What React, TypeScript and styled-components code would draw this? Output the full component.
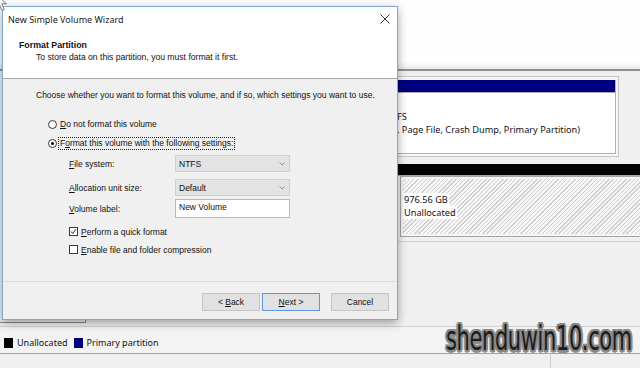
import React from "react";
import styled, { createGlobalStyle } from "styled-components";

const GlobalStyle = createGlobalStyle`
  html, body { margin: 0; padding: 0; background: #f0f0f0; }
  body { font-family: "Liberation Sans", Arial, sans-serif; color: #111; }
  #root { width: 640px; height: 368px; }
`;

const Screen = styled.div`
  position: relative;
  width: 640px;
  height: 368px;
  overflow: hidden;
  display: flex;
  flex-direction: column;
  background: #f0f0f0;
`;

/* ---------- background: disk management ---------- */
const TopPane = styled.div`
  flex: none;
  height: 69px;
  background: linear-gradient(#fefefe 0, #fefefe 62px, #e9e9e9 69px);
  border-bottom: 2px solid #8e8e8e;
`;

const DiskPane = styled.div`
  flex: none;
  height: 255px;
  display: grid;
  grid-template-columns: 86px 311px 1fr;
`;

const LabelColumn = styled.div`
  border-right: 1px solid #8a8a8a;
  border-bottom: 1px solid #8a8a8a;
  margin-bottom: 3px;
`;

const Hidden = styled.div``;

const DiskColumn = styled.div`
  display: flex;
  flex-direction: column;
  padding-top: 5px;
  border-bottom: 1px solid #cfcfcf;
  margin-bottom: 84px;
`;

const PartitionOuter = styled.div`
  width: 222px;
  height: 81px;
  box-sizing: border-box;
  border: 1px solid #c6c6c6;
  border-left: none;
  background: #f6f6f6;
  padding: 3px 2px 2px 0;
`;

const PartitionInner = styled.div`
  height: 100%;
  box-sizing: border-box;
  background: #fff;
  border: 1px solid #b0b0b0;
  border-left: none;
  border-top: none;
`;

const DiskBar = styled.div<{ $color: string; $height: number }>`
  height: ${(p) => p.$height}px;
  background: ${(p) => p.$color};
  border-bottom: 1px solid #a8a8a8;
`;

const VolumeText = styled.div`
  padding-top: 17px;
  font-family: "Noto Sans", "Open Sans", sans-serif;
  font-size: 9.2px;
  line-height: 13px;
  color: #111;
  white-space: nowrap;
`;

const UnallocRow = styled.div`
  margin-top: 7px;
  display: flex;
  flex-direction: column;
`;

const UnallocBox = styled.div`
  margin-left: 3px;
  height: 61px;
  box-sizing: border-box;
  border: 1px solid #a6a6a6;
  border-right: none;
  padding: 2px 0 2px 2px;
  background: #f4f4f4;
`;

const Hatch = styled.div`
  height: 100%;
  background: repeating-linear-gradient(-45deg, #cfcfcf 0 1px, #f7f7f7 1px 3px);
  padding: 14px 0 0 0;
  box-sizing: border-box;
  display: flex;
  flex-direction: column;
  align-items: flex-start;
  font-family: "Noto Sans", "Open Sans", sans-serif;
  font-size: 9.2px;
  line-height: 13px;
`;

const HatchLabel = styled.span`
  background: #fff;
  padding: 0 1px;
`;

const Legend = styled.div`
  flex: none;
  height: 21px;
  box-sizing: content-box;
  border-top: 1px solid #d2d2d2;
  border-bottom: 1px solid #a2a2a2;
  background: #f3f3f3;
  display: flex;
  align-items: center;
  padding: 5px 0 0 4px;
  margin-bottom: -5px;
  gap: 4px;
  font-family: "Noto Sans", "Open Sans", sans-serif;
  font-size: 9px;
`;

const Swatch = styled.span<{ $color: string }>`
  width: 9px;
  height: 10px;
  background: ${(p) => p.$color};
  display: inline-block;
`;

const LegendText = styled.span`
  margin-right: 2px;
`;

const StatusBar = styled.div`
  flex: 1;
  display: grid;
  grid-template-columns: 550px 1fr;
`;

const StatusCell = styled.div`
  & + & {
    border-left: 1px solid #d0d0d0;
  }
`;

/* ---------- dialog ---------- */
const Dialog = styled.div`
  position: absolute;
  left: 2px;
  top: 6px;
  width: 396px;
  height: 314px;
  box-sizing: border-box;
  border: 1px solid #7ea9d4;
  background: #fff;
  box-shadow: 0 3px 9px rgba(0, 0, 0, 0.35);
  display: flex;
  flex-direction: column;
`;

const TitleBar = styled.div`
  flex: none;
  height: 24px;
  display: flex;
  align-items: center;
  justify-content: space-between;
  padding: 0 7px 0 5px;
  font-family: "Noto Sans", "Open Sans", sans-serif;
  font-size: 9px;
  color: #1a1a1a;
`;

const Header = styled.div`
  flex: none;
  height: 48px;
  border-bottom: 1px solid #a9a9a9;
  padding: 8px 0 0 16px;
  box-sizing: border-box;
  font-size: 8.6px;
  line-height: 12px;
`;

const HeaderTitle = styled.div`
  font-weight: bold;
  font-size: 8.8px;
`;

const HeaderSub = styled.div`
  padding-left: 17px;
`;

const Body = styled.div`
  flex: 1;
  background: #f0f0f0;
  padding: 10px 0 0 33px;
  display: flex;
  flex-direction: column;
  font-size: 8.5px;
  line-height: 12px;
`;

const Intro = styled.div`
  height: 12px;
`;

const RadioRow = styled.div<{ $mt: number }>`
  margin: ${(p) => p.$mt}px 0 0 12px;
  height: 14px;
  display: flex;
  align-items: center;
  gap: 1px;
`;

const Radio = styled.span<{ $on?: boolean }>`
  width: 7px;
  height: 7px;
  border: 1px solid #3a3a3a;
  border-radius: 50%;
  background: #fff;
  display: inline-flex;
  align-items: center;
  justify-content: center;
  &::after {
    content: "";
    width: 3px;
    height: 3px;
    border-radius: 50%;
    background: ${(p) => (p.$on ? "#000" : "transparent")};
  }
`;

const FocusLabel = styled.span<{ $focus?: boolean }>`
  padding: 0 1px;
  border: 1px dotted ${(p) => (p.$focus ? "#222" : "transparent")};
  line-height: 11px;
`;

const Key = styled.u`
  text-decoration-thickness: 1px;
  text-underline-offset: 1px;
`;

const FieldRow = styled.div<{ $mt: number; $h: number }>`
  margin: ${(p) => p.$mt}px 0 0 33px;
  height: ${(p) => p.$h}px;
  display: grid;
  grid-template-columns: 106px 115px;
  align-items: center;
`;

const Combo = styled.div`
  height: 17px;
  box-sizing: border-box;
  background: #e3e3e3;
  border: 1px solid #d0d0d0;
  display: flex;
  align-items: center;
  justify-content: space-between;
  padding: 0 4px 0 3px;
`;

const TextBox = styled.div`
  height: 19px;
  box-sizing: border-box;
  background: #fff;
  border: 1px solid #b9b9b9;
  display: flex;
  align-items: center;
  padding: 0 0 3px 3px;
`;

const CheckRow = styled.div<{ $mt: number }>`
  margin: ${(p) => p.$mt}px 0 0 33px;
  height: 13px;
  display: flex;
  align-items: center;
  gap: 3px;
`;

const CheckBox = styled.span`
  width: 9px;
  height: 9px;
  box-sizing: border-box;
  border: 1px solid #3a3a3a;
  background: #fff;
  display: inline-flex;
  align-items: center;
  justify-content: center;
`;

const Footer = styled.div`
  flex: none;
  height: 38px;
  border-top: 1px solid #dadada;
  background: #f0f0f0;
  display: flex;
  justify-content: flex-end;
  align-items: flex-start;
  padding: 11px 8px 0 0;
  box-sizing: border-box;
  font-size: 8.5px;
`;

const Button = styled.div<{ $primary?: boolean; $ml: number }>`
  width: 58px;
  height: 18px;
  box-sizing: border-box;
  margin-left: ${(p) => p.$ml}px;
  background: #e1e1e1;
  border: 1px solid ${(p) => (p.$primary ? "#5a9ad9" : "#c4c4c4")};
  display: flex;
  align-items: center;
  justify-content: center;
`;

const Watermark = styled.div`
  position: absolute;
  left: 446px;
  top: 319px;
  font-family: "DejaVu Sans Condensed", "DejaVu Sans", sans-serif;
  font-size: 33px;
  letter-spacing: -0.5px;
  color: #1c1c1c;
  transform: scale(0.705, 1);
  transform-origin: left top;
  white-space: nowrap;
  text-shadow: 0 0 1px #8a8888, 2px 0 0 #8a8888, -2px 0 0 #8a8888, 0 2px 0 #8a8888,
    0 -2px 0 #8a8888, 2px 2px 0 #8a8888, -2px -2px 0 #8a8888, 2px -2px 0 #8a8888,
    -2px 2px 0 #8a8888, 3px 0 1px #8a8888, -3px 0 1px #8a8888, 0 3px 1px #8a8888;
`;

const Cursor = styled.svg`
  position: absolute;
  left: -5px;
  top: -7px;
`;

const CloseIcon = () => (
  <svg width="10" height="10" viewBox="0 0 10 10">
    <path d="M0.5 0.5 L9.5 9.5 M9.5 0.5 L0.5 9.5" stroke="#333" strokeWidth="1" fill="none" />
  </svg>
);

const Chevron = () => (
  <svg width="6" height="4" viewBox="0 0 6 4">
    <path d="M0.5 0.5 L3 3 L5.5 0.5" stroke="#8a8a8a" strokeWidth="0.9" fill="none" />
  </svg>
);

const Tick = () => (
  <svg width="7" height="7" viewBox="0 0 7 7">
    <path d="M1 3.5 L2.8 5.5 L6 1.2" stroke="#222" strokeWidth="1" fill="none" />
  </svg>
);

export default function App() {
  return (
    <>
      <GlobalStyle />
      <Screen>
        <TopPane />
        <DiskPane>
          <LabelColumn />
          <Hidden />
          <DiskColumn>
            <PartitionOuter>
              <PartitionInner>
                <DiskBar $color="#000080" $height={12} />
                <VolumeText>
                  <div>FS</div>
                  <div>, Page File, Crash Dump, Primary Partition)</div>
                </VolumeText>
              </PartitionInner>
            </PartitionOuter>
            <UnallocRow>
              <DiskBar $color="#000" $height={11} />
              <UnallocBox>
                <Hatch>
                  <HatchLabel>976.56 GB</HatchLabel>
                  <HatchLabel>Unallocated</HatchLabel>
                </Hatch>
              </UnallocBox>
            </UnallocRow>
          </DiskColumn>
        </DiskPane>
        <Legend>
          <Swatch $color="#000" />
          <LegendText>Unallocated</LegendText>
          <Swatch $color="#000080" />
          <LegendText>Primary partition</LegendText>
        </Legend>
        <StatusBar>
          <StatusCell />
          <StatusCell />
        </StatusBar>

        <Dialog>
          <TitleBar>
            <span>New Simple Volume Wizard</span>
            <CloseIcon />
          </TitleBar>
          <Header>
            <HeaderTitle>Format Partition</HeaderTitle>
            <HeaderSub>To store data on this partition, you must format it first.</HeaderSub>
          </Header>
          <Body>
            <Intro>Choose whether you want to format this volume, and if so, which settings you want to use.</Intro>
            <RadioRow $mt={16}>
              <Radio />
              <FocusLabel>
                <Key>D</Key>o not format this volume
              </FocusLabel>
            </RadioRow>
            <RadioRow $mt={5}>
              <Radio $on />
              <FocusLabel $focus>
                F<Key>o</Key>rmat this volume with the following settings:
              </FocusLabel>
            </RadioRow>
            <FieldRow $mt={5} $h={17}>
              <span>
                <Key>F</Key>ile system:
              </span>
              <Combo>
                <span>NTFS</span>
                <Chevron />
              </Combo>
            </FieldRow>
            <FieldRow $mt={7} $h={17}>
              <span>
                <Key>A</Key>llocation unit size:
              </span>
              <Combo>
                <span>Default</span>
                <Chevron />
              </Combo>
            </FieldRow>
            <FieldRow $mt={3} $h={19}>
              <span>
                <Key>V</Key>olume label:
              </span>
              <TextBox>New Volume</TextBox>
            </FieldRow>
            <CheckRow $mt={7}>
              <CheckBox>
                <Tick />
              </CheckBox>
              <span>
                <Key>P</Key>erform a quick format
              </span>
            </CheckRow>
            <CheckRow $mt={5}>
              <CheckBox />
              <span>
                <Key>E</Key>nable file and folder compression
              </span>
            </CheckRow>
          </Body>
          <Footer>
            <Button $ml={0}>
              &lt;&nbsp;<Key>B</Key>ack
            </Button>
            <Button $primary $ml={2}>
              <Key>N</Key>ext &gt;
            </Button>
            <Button $ml={11}>Cancel</Button>
          </Footer>
        </Dialog>

        <Watermark>shenduwin10.com</Watermark>
        <Cursor width="14" height="20" viewBox="0 0 14 20">
          <path d="M1 1 L1 15 L4.5 11.6 L7 17.5 L9.3 16.5 L6.8 10.8 L11.5 10.8 Z" fill="#fff" stroke="#555" strokeWidth="0.8" />
        </Cursor>
      </Screen>
    </>
  );
}
